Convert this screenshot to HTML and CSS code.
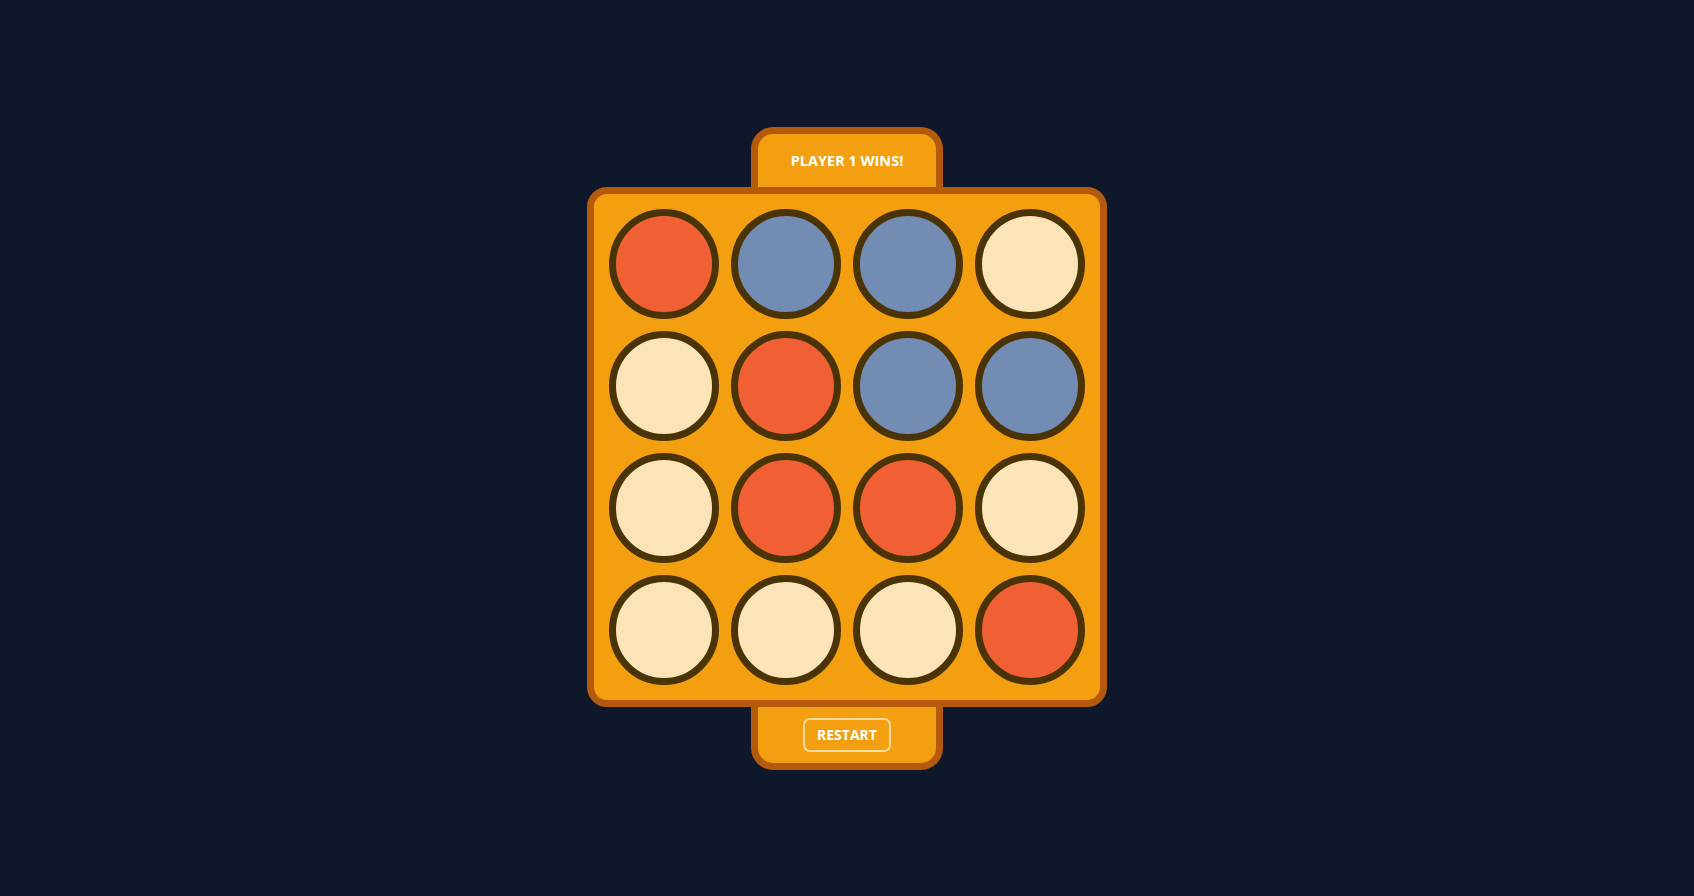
FILE: index.html
```html
<!DOCTYPE html>
<html lang="en">
<head>
<meta charset="utf-8">
<title>Connect Four</title>
<link rel="stylesheet" href="styles.css">
</head>
<body>
<main class="game">
  <div class="tab tab-top"><span class="status">PLAYER 1 WINS!</span></div>
  <div class="board">
    <div class="cell red"></div>
    <div class="cell blue"></div>
    <div class="cell blue"></div>
    <div class="cell empty"></div>
    <div class="cell empty"></div>
    <div class="cell red"></div>
    <div class="cell blue"></div>
    <div class="cell blue"></div>
    <div class="cell empty"></div>
    <div class="cell red"></div>
    <div class="cell red"></div>
    <div class="cell empty"></div>
    <div class="cell empty"></div>
    <div class="cell empty"></div>
    <div class="cell empty"></div>
    <div class="cell red"></div>
  </div>
  <div class="tab tab-bottom"><button class="restart">RESTART</button></div>
</main>
</body>
</html>
```
FILE: styles.css
```css
* { box-sizing: border-box; }
html, body { margin: 0; height: 100%; }
body {
  background: #0f172a;
  font-family: "Open Sans", "Liberation Sans", sans-serif;
  display: flex;
  align-items: center;
  justify-content: center;
}
.game {
  display: flex;
  flex-direction: column;
  align-items: center;
}
.tab {
  width: 192px;
  background: #f39f0f;
  border: 7px solid #b55a0a;
  display: flex;
  align-items: center;
  justify-content: center;
}
.tab-top {
  height: 60px;
  border-bottom: 0;
  border-radius: 22px 22px 0 0;
}
.tab-bottom {
  height: 63px;
  border-top: 0;
  border-radius: 0 0 22px 22px;
}
.status {
  color: #ffffff;
  font-weight: 700;
  font-size: 14.5px;
  margin-top: 0;
}
.board {
  width: 520px;
  height: 520px;
  background: #f39f0f;
  border: 7px solid #b55a0a;
  border-radius: 20px;
  padding: 15px;
  display: grid;
  grid-template-columns: repeat(4, 110px);
  grid-template-rows: repeat(4, 110px);
  gap: 12px;
}
.cell {
  width: 110px;
  height: 110px;
  border-radius: 50%;
  border: 7px solid #4a3305;
}
.red { background: #f06034; }
.blue { background: #738cb3; }
.empty { background: #fde3b8; }
.restart {
  width: 88px;
  height: 34px;
  background: transparent;
  border: 2px solid rgba(255, 240, 210, 0.75);
  border-radius: 7px;
  color: #ffffff;
  font-family: "Open Sans", "Liberation Sans", sans-serif;
  font-weight: 700;
  font-size: 14px;
  padding: 0;
  margin-top: 0;
  cursor: pointer;
}
```
